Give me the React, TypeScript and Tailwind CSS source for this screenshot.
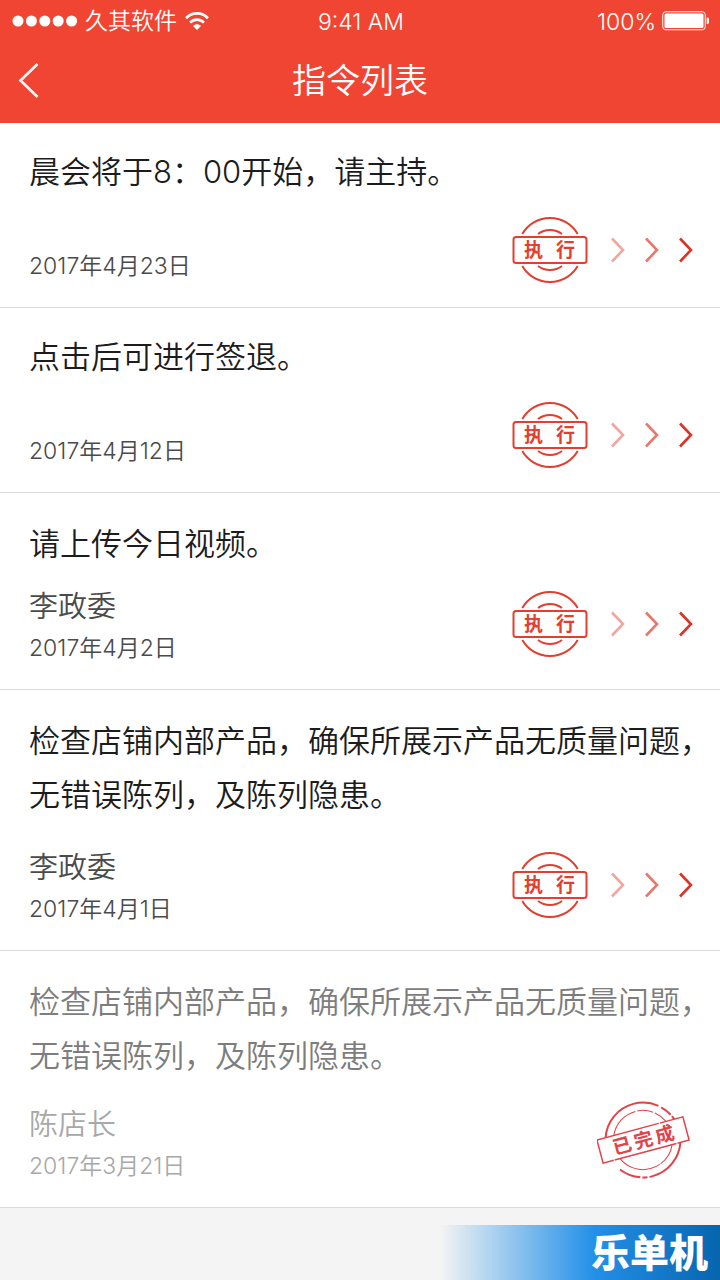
import React from 'react';

interface Order {
  id: number;
  text: string;
  author?: string;
  date: string;
  done?: boolean;
  bodyClass: string;
}

const orders: Order[] = [
  { id: 1, text: '晨会将于8：00开始，请主持。', date: '2017年4月23日', bodyClass: 'pt-[22px] pb-[18px]' },
  { id: 2, text: '点击后可进行签退。', date: '2017年4月12日', bodyClass: 'pt-[22px] pb-[18px]' },
  { id: 3, text: '请上传今日视频。', author: '李政委', date: '2017年4月2日', bodyClass: 'pt-6 pb-4' },
  {
    id: 4,
    text: '检查店铺内部产品，确保所展示产品无质量问题，无错误陈列，及陈列隐患。',
    author: '李政委',
    date: '2017年4月1日',
    bodyClass: 'pt-6 pb-[26px]',
  },
  {
    id: 5,
    text: '检查店铺内部产品，确保所展示产品无质量问题，无错误陈列，及陈列隐患。',
    author: '陈店长',
    date: '2017年3月21日',
    done: true,
    bodyClass: 'pt-6 pb-[22px]',
  },
];

function StatusBar() {
  return (
    <div className="grid h-10 grid-cols-3 items-center pr-[10px] pl-3 text-[23px] leading-10 font-[350]">
      <div className="flex items-center whitespace-nowrap">
        <svg width="66" height="12" viewBox="0 0 66 12" fill="currentColor" aria-hidden="true">
          <circle cx="6" cy="6" r="5.5" />
          <circle cx="19.4" cy="6" r="5.5" />
          <circle cx="32.8" cy="6" r="5.5" />
          <circle cx="46.2" cy="6" r="5.5" />
          <circle cx="59.6" cy="6" r="5.5" />
        </svg>
        <span className="ml-[7px]">久其软件</span>
        <svg className="ml-2" width="24" height="18" viewBox="0 0 24 18" fill="none" stroke="currentColor" aria-hidden="true">
          <path d="M1 6.2 C7 -0.2 17 -0.2 23 6.2" strokeWidth="2.8" />
          <path d="M5 10.6 C9 6.6 15 6.6 19 10.6" strokeWidth="2.6" />
          <path d="M8 14 C10.3 11.6 13.7 11.6 16 14 L12 18 Z" fill="currentColor" stroke="none" />
        </svg>
      </div>
      <div className="pt-[2px] text-center">9:41 AM</div>
      <div className="flex items-center justify-end gap-[6px]">
        <span className="pt-[2px]">100%</span>
        <svg width="48" height="20" viewBox="0 0 48 20" aria-hidden="true">
          <rect x="0.75" y="0.75" width="42.5" height="18" rx="3" fill="none" stroke="currentColor" />
          <rect x="2.5" y="2.5" width="39" height="14.5" rx="1.5" fill="currentColor" />
          <path d="M44.7 6.5 h1 a1.5 1.5 0 0 1 1.3 1.5 v3.5 a1.5 1.5 0 0 1 -1.3 1.5 h-1 Z" fill="currentColor" />
        </svg>
      </div>
    </div>
  );
}

function Header() {
  return (
    <header className="bg-[#f14533] pb-[3px] text-white">
      <StatusBar />
      <div className="grid h-20 grid-cols-[80px_1fr_80px] items-center">
        <button type="button" aria-label="返回" className="flex h-full items-center pl-[17px]">
          <svg width="22" height="36" viewBox="0 0 22 36" fill="none" stroke="currentColor" strokeWidth="2.6">
            <path d="M20.5 2 L3.5 18.5 L20.5 35" />
          </svg>
        </button>
        <h1 className="pt-[2px] text-center text-[34px] leading-[48px] font-[350]">指令列表</h1>
      </div>
    </header>
  );
}

function Chevron({ className }: { className: string }) {
  return (
    <svg className={className} width="14" height="26" viewBox="0 0 14 26" fill="none" stroke="currentColor" strokeWidth="2.6" aria-hidden="true">
      <path d="M1 1.5 L12 13 L1 24.5" />
    </svg>
  );
}

function ExecuteStamp() {
  return (
    <svg width="76" height="66" viewBox="0 0 76 66" fill="none" stroke="#e23f2f" strokeWidth="2">
      <path d="M10.3 17 A32 32 0 0 1 65.7 17" />
      <path d="M26 17 A20 20 0 0 1 50 17" />
      <path d="M10.3 49 A32 32 0 0 0 65.7 49" />
      <path d="M26 49 A20 20 0 0 0 50 49" />
      <rect x="1.5" y="20" width="73" height="26" rx="2.5" />
      <g fill="#e23f2f" stroke="none" className="text-[19px] font-bold">
        <text x="12" y="40">执</text>
        <text x="44" y="40">行</text>
      </g>
    </svg>
  );
}

function DoneStamp() {
  return (
    <svg width="94" height="78" viewBox="0 0 94 78" fill="none" stroke="#e0434a" role="img" aria-label="已完成">
      <g transform="rotate(-15 46 39)">
        <path d="M10.5 27 A37.5 37.5 0 0 1 81.5 27" strokeWidth="2" strokeDasharray="72 3 12 2" />
        <path d="M19 27 A29.5 29.5 0 0 1 73 27" strokeWidth="1" strokeDasharray="34 2 16 2" />
        <path d="M10.5 51 A37.5 37.5 0 0 0 81.5 51" strokeWidth="2" strokeDasharray="0 12 22 2 5 2 60 3" />
        <path d="M19 51 A29.5 29.5 0 0 0 73 51" strokeWidth="1" strokeDasharray="44 1 30 1" />
        <rect x="1.5" y="27" width="89" height="24" strokeWidth="1.5" strokeDasharray="64 1 60 1" />
        <g fill="#e0434a" stroke="none" className="text-[19px] font-bold">
          <text x="15" y="46">已</text>
          <text x="37" y="46">完</text>
          <text x="59" y="46">成</text>
        </g>
      </g>
    </svg>
  );
}

function OrderItem({ order }: { order: Order }) {
  return (
    <li className="border-b border-[#d9d9d9] bg-white pr-[7px] pb-5 pl-[29px]">
      <p className={`text-[31px] leading-[54px] font-[350] ${order.bodyClass} ${order.done ? 'text-[#7d7d7d]' : 'text-[#1c1c1c]'}`}>
        {order.text}
      </p>
      <div className="flex items-end justify-between pr-5">
        <div className={`font-[350] ${order.done ? 'text-[#a8a8a8]' : 'text-[#4a4a4a]'}`}>
          {order.author && <div className="text-[29px] leading-10">{order.author}</div>}
          <time className="block text-[23px] leading-[42px]">{order.date}</time>
        </div>
        {order.done ? (
          <div className="-mt-2 mr-[2px] mb-2">
            <DoneStamp />
          </div>
        ) : (
          <button type="button" className={`flex items-center ${order.author ? 'mb-3' : 'mb-1'}`}>
            <ExecuteStamp />
            <Chevron className="ml-[23px] text-[#f0a79f]" />
            <Chevron className="ml-5 text-[#e8786d]" />
            <Chevron className="ml-5 text-[#dc3326]" />
          </button>
        )}
      </div>
    </li>
  );
}

function App() {
  return (
    <div className="flex min-h-screen flex-col bg-[#f4f4f4] font-['Inter','Noto_Sans_CJK_SC',sans-serif]">
      <Header />
      <ul>
        {orders.map(order => (
          <OrderItem key={order.id} order={order} />
        ))}
      </ul>
      <footer className="mt-auto flex h-[55px] w-[280px] items-center justify-end self-end bg-linear-to-r from-[#1d8be6]/0 via-[#2390e8] via-55% to-[#0765ae] pr-3 text-[39px] leading-[55px] font-black text-white">
        乐单机
      </footer>
    </div>
  );
}

export default App;
